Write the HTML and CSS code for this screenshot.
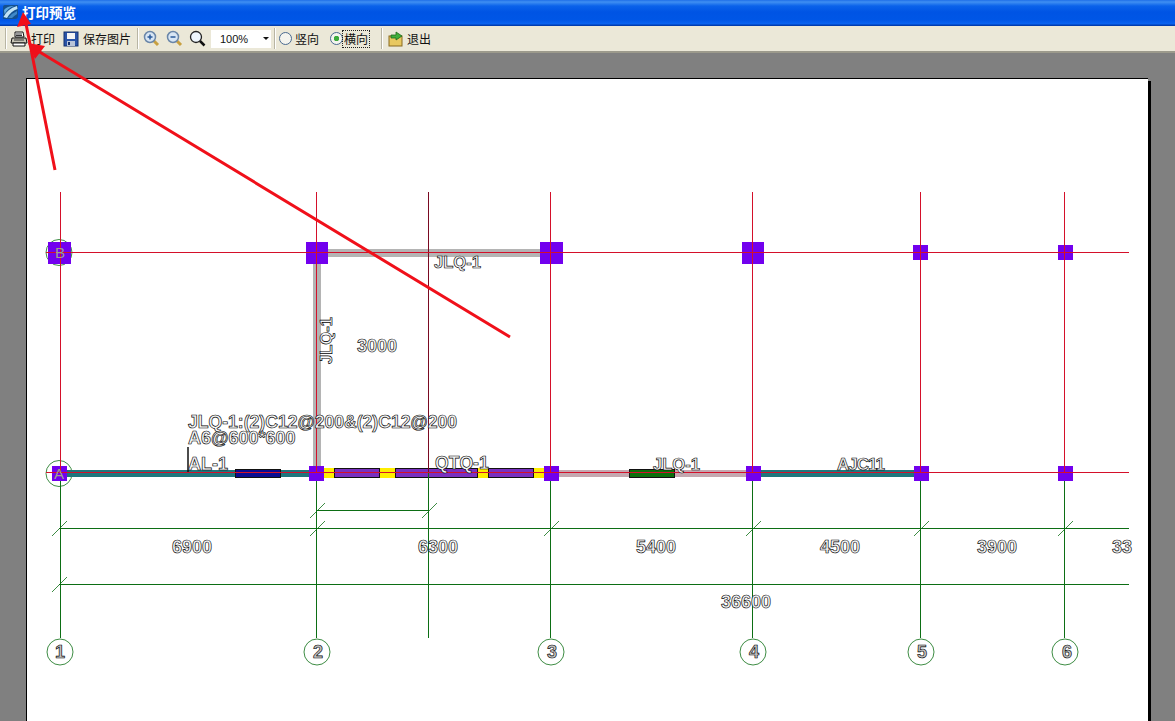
FILE: index.html
```html
<!DOCTYPE html>
<html lang="zh">
<head>
<meta charset="utf-8">
<title>打印预览</title>
<link rel="stylesheet" href="styles.css">
</head>
<body>
<div class="window">
  <header class="titlebar">
    <svg class="app-icon" width="17" height="16" viewBox="0 0 17 16"><path d="M3 1 H16 V12 Q16 15 13 15 H1 V3 Q1 1 3 1 Z" fill="#14508f"/><path d="M1.500 13 Q5 5 15 2 L15.500 5 Q9 7 5 14 Z" fill="#bfe2f6"/><path d="M2 6 Q5 2 12 2 Q6 4 2.500 10 Z" fill="#5fa8de"/><path d="M6 14 Q10 9 15 7 V10 Q12 12 10 14 Z" fill="#3f88c8"/></svg>
    <span class="title-text">打印预览</span>
  </header>
  <nav class="toolbar">
    <span class="grip"></span>
    <span class="tool tool-print">
      <svg width="18" height="18" viewBox="0 0 18 18"><path d="M5 2 H13 L14 7 H5 Z" fill="#fff" stroke="#111"/><path d="M2 8 H16 L17 13 H1 Z" fill="#c9c6b8" stroke="#111"/><path d="M3 13 H15 V16 H3 Z" fill="#fff" stroke="#111"/><path d="M6 4 H12 M6 5.500 H12 M4 10 H14" stroke="#333" fill="none"/></svg>
      <span class="tool-label tight">打印</span>
    </span>
    <span class="tool tool-save">
      <svg width="16" height="16" viewBox="0 0 16 16"><rect x="1" y="1" width="14" height="14" fill="#2a54a8" stroke="#14306e"/><rect x="4" y="2" width="8" height="6" fill="#f4f4f4"/><rect x="4" y="10" width="8" height="5" fill="#b9c4d8"/><rect x="5" y="11" width="2" height="3" fill="#14306e"/></svg>
      <span class="tool-label">保存图片</span>
    </span>
    <span class="sep sep-a"></span>
    <span class="tool tool-zoomin">
      <svg width="17" height="17" viewBox="0 0 17 17"><path d="M10 10 L15 15" stroke="#c8a040" stroke-width="3"/><circle cx="7" cy="7" r="5.500" fill="#d8e6f4" stroke="#6a86a8" stroke-width="1.500"/><path d="M4.500 7 H9.500 M7 4.500 V9.500" stroke="#2a5a9a" stroke-width="1.500"/></svg>
    </span>
    <span class="tool tool-zoomout">
      <svg width="17" height="17" viewBox="0 0 17 17"><path d="M10 10 L15 15" stroke="#c8a040" stroke-width="3"/><circle cx="7" cy="7" r="5.500" fill="#d8e6f4" stroke="#6a86a8" stroke-width="1.500"/><path d="M4.500 7 H9.500" stroke="#2a5a9a" stroke-width="1.500"/></svg>
    </span>
    <span class="tool tool-zoom">
      <svg width="17" height="17" viewBox="0 0 17 17"><path d="M10 10 L15.500 15.500" stroke="#111" stroke-width="2.500"/><circle cx="7" cy="7" r="5.500" fill="#eef5fb" stroke="#222" stroke-width="1.300"/></svg>
    </span>
    <span class="combo"><span class="combo-value">100%</span><span class="combo-arrow"></span></span>
    <span class="sep sep-b"></span>
    <span class="radio-item radio-first"><span class="radio"></span><span class="tool-label">竖向</span></span>
    <span class="radio-item radio-second"><span class="radio radio-on"></span><span class="tool-label focus">横向</span></span>
    <span class="sep sep-c"></span>
    <span class="tool tool-exit">
      <svg width="16" height="16" viewBox="0 0 16 16"><rect x="1" y="5" width="13" height="10" fill="#e8c860" stroke="#8a6a20"/><path d="M3 7 V4 L8 4 V1 L14 5 L8 9 V7 Z" fill="#3fae3a" stroke="#1f6a1c" stroke-width=".8"/></svg>
      <span class="tool-label">退出</span>
    </span>
  </nav>
  <main class="workspace">
    <section class="paper">
      <svg class="drawing" width="1121" height="642" viewBox="27 79 1121 642">
        <g class="axes-green">
          <circle cx="59" cy="252.500" r="13"/>
          <circle cx="59" cy="473.500" r="13"/>
        </g>
        <g class="walls">
          <path class="wall-grey" d="M317 253 H551 M317 249 V473"/>
          <path class="wall-teal" d="M59 473.500 H317 M753 473.500 H921"/>
          <path class="wall-pink" d="M551 473.500 H753"/>
          <rect class="fill-yellow" x="324" y="468" width="220" height="10"/>
          <rect class="win-purple" x="334.500" y="468.500" width="45" height="9"/>
          <rect class="win-purple" x="395.500" y="468.500" width="82" height="9"/>
          <rect class="win-purple" x="488.500" y="468.500" width="45" height="9"/>
          <rect class="win-blue" x="235.500" y="469.500" width="45" height="8"/>
          <rect class="win-green" x="629.500" y="469.500" width="45" height="8"/>
        </g>
        <g class="axes-green">
          <path d="M60.500 473 V638 M316.500 473 V638 M428.500 473 V638 M550.500 473 V638 M752.500 473 V638 M920.500 473 V638 M1064.500 473 V638"/>
          <path d="M59 528.500 H1129 M59 584.500 H1129 M317 510.500 H429"/>
          <path class="tick" d="M52 536 L67 521 M310 536 L325 521 M544 536 L559 521 M746 536 L761 521 M914 536 L929 521 M1058 536 L1073 521 M52 592 L67 577 M310 518 L325 503 M422 518 L437 503"/>
          <circle cx="60" cy="652" r="13"/>
          <circle cx="317" cy="652" r="13"/>
          <circle cx="551" cy="652" r="13"/>
          <circle cx="753" cy="652" r="13"/>
          <circle cx="921" cy="652" r="13"/>
          <circle cx="1065" cy="652" r="13"/>
        </g>
        <g class="columns">
          <rect x="48" y="242" width="23" height="22"/>
          <rect x="306" y="242" width="22" height="22"/>
          <rect x="540" y="242" width="23" height="22"/>
          <rect x="742" y="242" width="22" height="22"/>
          <rect x="913" y="245" width="15" height="15"/>
          <rect x="1058" y="245" width="15" height="15"/>
          <rect x="52" y="466" width="15" height="15"/>
          <rect x="309" y="466" width="15" height="15"/>
          <rect x="544" y="466" width="15" height="15"/>
          <rect x="746" y="466" width="15" height="15"/>
          <rect x="914" y="466" width="15" height="15"/>
          <rect x="1058" y="466" width="15" height="15"/>
        </g>
        <g class="axes-red">
          <path d="M60.500 192 V473 M316.500 192 V473 M550.500 192 V473 M752.500 192 V473 M920.500 192 V473 M1064.500 192 V473"/>
          <path class="axis-dark" d="M428.500 192 V473"/>
          <path d="M46 252.500 H1129 M46 472.500 H1129"/>
        </g>
        <path class="leader" d="M188 447 V472"/>
        <g class="labels">
          <text class="axis-letter" x="55" y="258">B</text>
          <text class="axis-letter" x="54" y="479">A</text>
          <text class="jlq" x="434" y="268">JLQ-1</text>
          <text class="jlq" transform="translate(332 364) rotate(-90)">JLQ-1</text>
          <text x="357" y="352">3000</text>
          <text class="note" x="188" y="428">JLQ-1:(2)C12@200&amp;(2)C12@200</text>
          <text x="188" y="444">A6@600*600</text>
          <text x="188" y="470">AL-1</text>
          <text class="note" x="435" y="469">QTQ-1</text>
          <text class="jlq" x="653" y="470">JLQ-1</text>
          <text class="squeezed" x="837" y="470">AJC11</text>
          <text x="172" y="553">6900</text>
          <text x="418" y="553">6300</text>
          <text x="636" y="553">5400</text>
          <text x="820" y="553">4500</text>
          <text x="977" y="553">3900</text>
          <text x="1112" y="553">33</text>
          <text x="721" y="608">36600</text>
          <text class="axis-num" x="55" y="658">1</text>
          <text class="axis-num" x="313" y="658">2</text>
          <text class="axis-num" x="547" y="658">3</text>
          <text class="axis-num" x="749" y="658">4</text>
          <text class="axis-num" x="917" y="658">5</text>
          <text class="axis-num" x="1062" y="658">6</text>
        </g>
      </svg>
    </section>
  </main>
  <svg class="annotations" width="1175" height="721" viewBox="0 0 1175 721">
    <path class="arrow-line" d="M55 170 L26 24 M510 337 L38 51"/>
    <path class="arrow-head" d="M23 12 L17 27 L31 24 Z M28 43 L35 59 L45 46 Z"/>
  </svg>
</div>
</body>
</html>
```
FILE: styles.css
```css
html, body {
  margin: 0;
  padding: 0;
  height: 721px;
  overflow: hidden;
  background: #808080;
}

.window {
  position: relative;
  display: flex;
  flex-direction: column;
  width: 1175px;
  height: 721px;
  overflow: hidden;
  font-family: "Noto Sans CJK SC", "Liberation Sans", sans-serif;
}

.titlebar {
  display: flex;
  align-items: center;
  gap: 3px;
  height: 26px;
  flex: none;
  box-sizing: border-box;
  padding: 0 0 3px 2px;
  background: linear-gradient(#1f6fe8 0, #3f8ff2 2px, #0a62ea 6px, #0054e4 12px, #0056e6 20px, #0a64f0 24px, #003cb0 25px, #003cb0 26px);
}

.title-text {
  color: #fff;
  font-size: 13.500px;
  font-weight: 700;
  line-height: 16px;
}

.toolbar {
  display: flex;
  align-items: center;
  height: 27px;
  flex: none;
  box-sizing: border-box;
  background: #ebe8d8;
  border-bottom: 2px solid #9c9a8c;
  font-size: 12px;
  color: #111;
}

.grip {
  width: 1px;
  height: 21px;
  margin-left: 5px;
  background: #b8b5a4;
  border-right: 1px solid #fff;
}

.sep {
  width: 1px;
  height: 21px;
  background: #b8b5a4;
  border-right: 1px solid #fff;
}

.tool,
.radio-item {
  display: inline-flex;
  align-items: center;
}

.tool-label {
  line-height: 16px;
  white-space: nowrap;
}

.tight {
  margin-left: 3px;
}

.tool-print { margin-left: 3px; }
.tool-save { margin-left: 8px; gap: 4px; }
.sep-a { margin-left: 6px; }
.tool-zoomin { margin-left: 4px; }
.tool-zoomout { margin-left: 6px; }
.tool-zoom { margin-left: 6px; }

.combo {
  display: inline-flex;
  align-items: center;
  justify-content: space-between;
  width: 60px;
  height: 18px;
  margin-left: 5px;
  background: #fff;
}

.combo-value {
  flex: 1;
  text-align: center;
  font-family: "Liberation Sans", sans-serif;
  font-size: 11px;
  padding-right: 6px;
}

.combo-arrow {
  width: 0;
  height: 0;
  margin-right: 2px;
  border: 3px solid transparent;
  border-top: 3px solid #111;
  border-bottom: 0;
}

.sep-b { margin-left: 3px; }
.radio-first { margin-left: 3px; gap: 3px; }
.radio-second { margin-left: 11px; gap: 0; }
.sep-c { margin-left: 12px; }
.tool-exit { margin-left: 5px; gap: 3px; }

.radio {
  display: inline-block;
  width: 11px;
  height: 11px;
  border: 1px solid #4a6a90;
  border-radius: 50%;
  background: #f4f4ee;
}

.radio-on {
  background: radial-gradient(circle, #3cab3c 0, #3cab3c 2.500px, #f4f4ee 3px);
}

.focus {
  outline: 1px dotted #222;
  outline-offset: 0;
  padding: 0 1px;
}

.workspace {
  flex: 1;
  min-height: 0;
  box-sizing: border-box;
  padding: 25px 0 0 26px;
  background: #808080;
}

.paper {
  width: 1121px;
  height: 700px;
  background: #fff;
  border-top: 1px solid #000;
  border-left: 1px solid #000;
  box-shadow: 3px 3px 0 #000;
}

.drawing {
  display: block;
}

.wall-grey { fill: none; stroke: #b4b4b4; stroke-width: 8; }
.wall-teal { fill: none; stroke: #1f757c; stroke-width: 7; }
.wall-pink { fill: none; stroke: #c4a8b0; stroke-width: 7; }
.fill-yellow { fill: #ffee00; }
.win-purple { fill: #7a30c0; stroke: #111; }
.win-blue { fill: #0a0a90; stroke: #111; }
.win-green { fill: #0b6e0b; stroke: #111; }

.axes-green,
.axes-green path { fill: none; stroke: #0c6e14; stroke-width: 1; }
.axes-green circle { stroke-width: .8; }
.axes-green .tick { stroke-width: .8; }

.columns rect { fill: #7200ee; }

.axes-red path { fill: none; stroke: #d4102a; stroke-width: 1; }
.axes-red .axis-dark { stroke: #7a0a22; }

.leader { fill: none; stroke: #111; stroke-width: 1.500; }

.labels {
  opacity: .99;
}

.labels text {
  font-family: "Liberation Sans", sans-serif;
  font-size: 18px;
  font-weight: 700;
  fill: #f8f8f8;
  stroke: #000;
  stroke-width: .65;
}

.labels .jlq { font-size: 16.600px; }
.labels .note { font-size: 17.600px; }
.labels .squeezed { font-size: 17px; letter-spacing: -1px; }

.labels .axis-letter {
  font-size: 15px;
  font-weight: 400;
  fill: #a0a48c;
  stroke: none;
}

.labels .axis-num {
  fill: #c4c4c4;
  stroke: #000;
}

.annotations {
  position: absolute;
  left: 0;
  top: 0;
  pointer-events: none;
}

.arrow-line { fill: none; stroke: #f0101a; stroke-width: 3; }
.arrow-head { fill: #f0101a; }
```
